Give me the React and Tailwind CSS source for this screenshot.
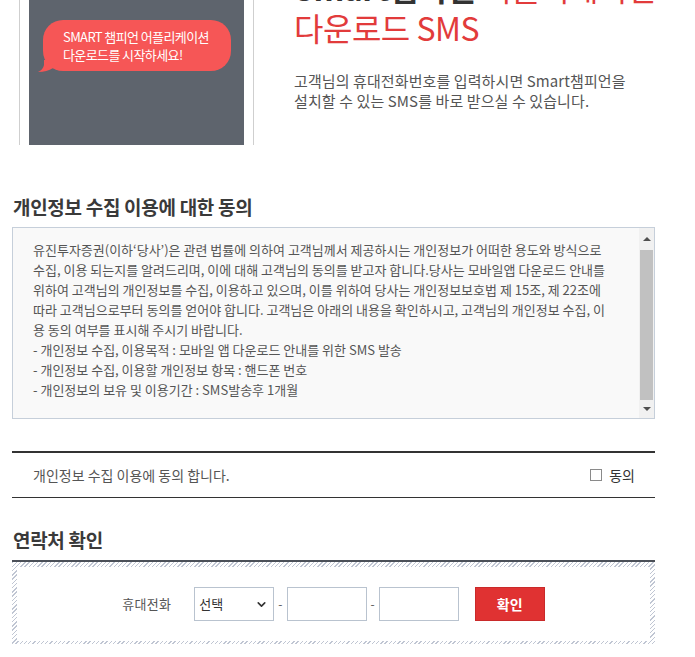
import React from "react";
import { ChevronDown } from "lucide-react";

const agreeLines = [
  "유진투자증권(이하‘당사’)은 관련 법률에 의하여 고객님께서 제공하시는 개인정보가 어떠한 용도와 방식으로",
  "수집, 이용 되는지를 알려드리며, 이에 대해 고객님의 동의를 받고자 합니다.당사는 모바일앱 다운로드 안내를",
  "위하여 고객님의 개인정보를 수집, 이용하고 있으며, 이를 위하여 당사는 개인정보보호법 제 15조, 제 22조에",
  "따라 고객님으로부터 동의를 얻어야 합니다. 고객님은 아래의 내용을 확인하시고, 고객님의 개인정보 수집, 이",
  "용 동의 여부를 표시해 주시기 바랍니다.",
  "- 개인정보 수집, 이용목적 : 모바일 앱 다운로드 안내를 위한 SMS 발송",
  "- 개인정보 수집, 이용할 개인정보 항목 : 핸드폰 번호",
  "- 개인정보의 보유 및 이용기간 : SMS발송후 1개월",
];

export default function App() {
  return (
    <div className="min-h-screen overflow-hidden bg-white font-['Noto_Sans_CJK_KR','Noto_Sans',sans-serif] text-[#333]">
      <div className="ml-[12px] -mt-[40px] w-[643px]">
        {/* ===== APP INTRO ===== */}
        <div className="flex">
          <div className="ml-[7px] border-x border-[#cfcfcf] px-[9px]">
            <div className="h-[185px] w-[215px] bg-[#5e646d] pl-[14px] pt-[60px]">
              <div className="relative h-[51px] w-[188px] rounded-[20px] bg-[#f65656] pl-[20px] pt-[8px] text-[13px] leading-[18px] tracking-[-0.6px] text-white">
                SMART 챔피언 어플리케이션
                <br />
                다운로드를 시작하세요!
                <svg
                  className="absolute bottom-[-1px] left-[-5px]"
                  width="18"
                  height="12"
                  viewBox="0 0 18 12"
                >
                  <path d="M6 0 L6 5 Q5 10 0 12 Q9 12 15 8 L15 0 Z" fill="#f65656" />
                </svg>
              </div>
            </div>
          </div>

          <div className="ml-[40px] pt-[7px]">
            <h2 className="whitespace-nowrap text-[32px] leading-[40px] tracking-[-0.5px]">
              <span className="font-bold text-[#333]">Smart챔피언 </span>
              <span className="text-[#e23b3b]">어플리케이션</span>
              <br />
              <span className="text-[#e23b3b]">다운로드 SMS</span>
            </h2>
            <p className="mt-[24px] text-[15px] leading-[20px] tracking-[0.1px] text-[#555]">
              고객님의 휴대전화번호를 입력하시면 Smart챔피언을
              <br />
              설치할 수 있는 SMS를 바로 받으실 수 있습니다.
            </p>
          </div>
        </div>

        {/* ===== AGREEMENT ===== */}
        <h3 className="mt-[50px] pl-[1px] text-[19px] font-bold leading-[24px] tracking-[-0.3px] text-[#3a3a3a]">
          개인정보 수집 이용에 대한 동의
        </h3>
        <div className="mt-[8px] flex h-[192px] border border-[#c6cfda] bg-[#f9f9f9]">
          <div className="flex-1 pl-[20px] pt-[12px] text-[13px] leading-[20px] text-[#555]">
            {agreeLines.map((line) => (
              <div key={line} className="whitespace-nowrap">
                {line}
              </div>
            ))}
          </div>
          <div className="flex w-[15px] flex-col bg-[#f1f1f1]">
            <div className="flex h-[22px] items-center justify-center">
              <div className="h-0 w-0 border-x-[4px] border-b-[4px] border-x-transparent border-b-[#505050]" />
            </div>
            <div className="mx-[1px] flex-1 bg-[#c1c1c1]" />
            <div className="flex h-[18px] items-center justify-center">
              <div className="h-0 w-0 border-x-[4px] border-t-[4px] border-x-transparent border-t-[#505050]" />
            </div>
          </div>
        </div>

        <div className="mt-[32px] flex h-[47px] items-center justify-between border-t-2 border-b border-[#333] pl-[21px] pr-[20px] text-[14px] text-[#555]">
          <span>개인정보 수집 이용에 동의 합니다.</span>
          <label className="flex items-center gap-[7px] text-[#333]">
            <span className="h-[12px] w-[12px] border border-[#8a8a8a] bg-white" />
            동의
          </label>
        </div>

        {/* ===== CONTACT ===== */}
        <h3 className="mt-[30px] pl-[1px] text-[19px] font-bold leading-[24px] tracking-[-0.3px] text-[#3a3a3a]">
          연락처 확인
        </h3>
        <div className="mt-[8px] border-t-2 border-[#4b5058] bg-[repeating-linear-gradient(135deg,#c0c6d3_0px,#c0c6d3_1px,#ffffff_1px,#ffffff_3px)] px-[5px] pb-[3px] pt-[5px]">
          <div className="flex items-center justify-center bg-white py-[20px] text-[12px] text-[#555]">
            <span className="mr-[23px] text-[13px] tracking-[0.3px]">휴대전화</span>
            <div className="relative">
              <select className="h-[34px] w-[80px] appearance-none border border-[#b9c3cf] bg-white pl-[4px] text-[13px] text-[#333] outline-none">
                <option>선택</option>
              </select>
              <ChevronDown
                className="pointer-events-none absolute right-[6px] top-[11px] h-[13px] w-[13px] text-[#333]"
                strokeWidth={3}
              />
            </div>
            <span className="mx-[4px]">-</span>
            <input className="h-[34px] w-[80px] border border-[#b9c3cf] bg-white outline-none" />
            <span className="mx-[4px]">-</span>
            <input className="h-[34px] w-[80px] border border-[#b9c3cf] bg-white outline-none" />
            <button className="ml-[16px] h-[34px] w-[70px] border border-[#c92a2a] bg-[#e03232] text-[14px] font-bold text-white">
              확인
            </button>
          </div>
        </div>
      </div>
    </div>
  );
}
